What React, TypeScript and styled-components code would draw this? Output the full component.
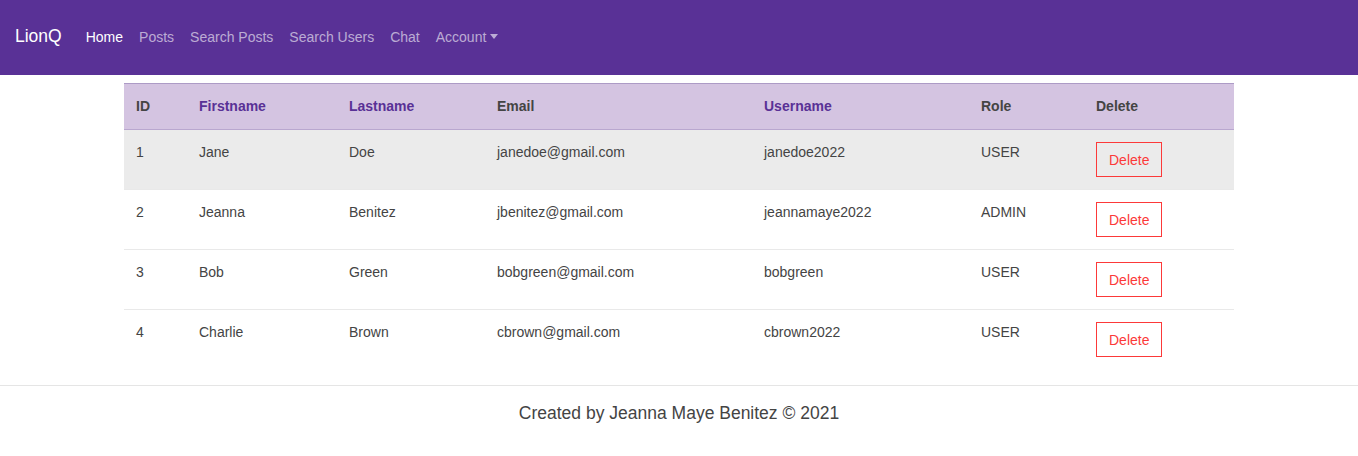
import React from "react";
import styled, { createGlobalStyle } from "styled-components";

const Global = createGlobalStyle`
  html, body { margin: 0; padding: 0; background: #fff; }
  body { font-family: "Liberation Sans", Arial, sans-serif; font-size: 14px; line-height: 1.5; color: #444; }
  * { box-sizing: border-box; }
`;

const NavBar = styled.nav`
  height: 75px;
  background: #593196;
  display: flex;
  align-items: center;
  padding: 0 15px 1px;
`;

const Brand = styled.a`
  font-size: 17.5px;
  color: #fff;
  margin-right: 24px;
  line-height: 1;
`;

const NavLinks = styled.div`
  display: flex;
  align-items: center;
  gap: 16px;
`;

const NavLink = styled.a<{ $active?: boolean }>`
  font-size: 14px;
  color: ${(p) => (p.$active ? "#fff" : "rgba(255,255,255,0.6)")};
  display: inline-flex;
  align-items: center;
`;

const Caret = styled.span`
  display: inline-block;
  margin-left: 4px;
  border-top: 5px solid rgba(255,255,255,0.6);
  border-left: 4px solid transparent;
  border-right: 4px solid transparent;
  margin-top: -1px;
`;

const Container = styled.div`
  width: 1110px;
  margin: 8px auto 0;
`;

const Table = styled.table`
  width: 100%;
  border-collapse: collapse;
  table-layout: fixed;
`;

const HeadRow = styled.tr`
  background: #d4c4e1;
  border-top: 1px solid #ad9bc6;
  border-bottom: 1px solid #b9a7cf;
`;

const Th = styled.th<{ $link?: boolean }>`
  text-align: left;
  font-weight: bold;
  padding: 11px 12px 12px;
  height: 46px;
  color: ${(p) => (p.$link ? "#593196" : "#444")};
`;

const Row = styled.tr<{ $active?: boolean }>`
  background: ${(p) => (p.$active ? "#ebebeb" : "#fff")};
  border-bottom: 1px solid #e9e9e9;
  &:last-child { border-bottom: none; }
`;

const Td = styled.td`
  padding: 12px 12px;
  height: 60px;
  vertical-align: top;
`;

const DeleteButton = styled.button`
  height: 35px;
  padding: 0 12px;
  border: 1px solid #fc3939;
  background: transparent;
  color: #fc3939;
  font-family: "Liberation Sans", Arial, sans-serif;
  font-size: 14px;
  border-radius: 0;
`;

const Footer = styled.footer`
  margin-top: 15px;
  border-top: 1px solid #e5e5e5;
  padding-top: 14px;
  text-align: center;
  font-size: 17.5px;
  color: #444;
`;

const users = [
  { id: 1, first: "Jane", last: "Doe", email: "janedoe@gmail.com", username: "janedoe2022", role: "USER" },
  { id: 2, first: "Jeanna", last: "Benitez", email: "jbenitez@gmail.com", username: "jeannamaye2022", role: "ADMIN" },
  { id: 3, first: "Bob", last: "Green", email: "bobgreen@gmail.com", username: "bobgreen", role: "USER" },
  { id: 4, first: "Charlie", last: "Brown", email: "cbrown@gmail.com", username: "cbrown2022", role: "USER" },
];

export default function App() {
  return (
    <>
      <Global />
      <NavBar>
        <Brand>LionQ</Brand>
        <NavLinks>
          <NavLink $active>Home</NavLink>
          <NavLink>Posts</NavLink>
          <NavLink>Search Posts</NavLink>
          <NavLink>Search Users</NavLink>
          <NavLink>Chat</NavLink>
          <NavLink>Account<Caret /></NavLink>
        </NavLinks>
      </NavBar>
      <Container>
        <Table>
          <colgroup>
            <col style={{ width: 63 }} />
            <col style={{ width: 150 }} />
            <col style={{ width: 148 }} />
            <col style={{ width: 267 }} />
            <col style={{ width: 217 }} />
            <col style={{ width: 115 }} />
            <col style={{ width: 150 }} />
          </colgroup>
          <thead>
            <HeadRow>
              <Th>ID</Th>
              <Th $link>Firstname</Th>
              <Th $link>Lastname</Th>
              <Th>Email</Th>
              <Th $link>Username</Th>
              <Th>Role</Th>
              <Th>Delete</Th>
            </HeadRow>
          </thead>
          <tbody>
            {users.map((u, i) => (
              <Row key={u.id} $active={i === 0}>
                <Td>{u.id}</Td>
                <Td>{u.first}</Td>
                <Td>{u.last}</Td>
                <Td>{u.email}</Td>
                <Td>{u.username}</Td>
                <Td>{u.role}</Td>
                <Td><DeleteButton>Delete</DeleteButton></Td>
              </Row>
            ))}
          </tbody>
        </Table>
      </Container>
      <Footer>Created by Jeanna Maye Benitez © 2021</Footer>
    </>
  );
}
